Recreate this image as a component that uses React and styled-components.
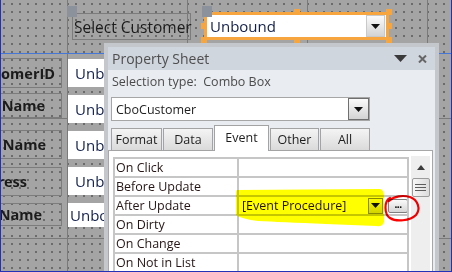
import React from "react";
import styled, { createGlobalStyle, css } from "styled-components";

const GlobalStyle = createGlobalStyle`
    html, body { margin: 0; padding: 0; background: #a4a4a4; }
    body { font-family: "Open Sans", "Noto Sans", sans-serif; overflow: hidden; }
`;

const CenterFlex = css`
    display: flex;
    align-items: center;
    justify-content: center;
`;

// design surface: gray grid with dots, inch lines and the header/detail section bar
const Canvas = styled.div`
    position: relative;
    width: 452px;
    height: 272px;
    overflow: hidden;
    isolation: isolate;
    background-color: #a4a4a4;
    background-image:
        linear-gradient(to bottom, transparent 53px, #4777d6 53px, #4777d6 54px, transparent 54px),
        linear-gradient(to right, #7a7a7a 1px, transparent 1px),
        linear-gradient(to bottom, #7a7a7a 1px, transparent 1px),
        radial-gradient(circle at 1px 1px, #6a6a6a 0.7px, transparent 1px);
    background-size: 100% 100%, 120px 100%, 100% 120px, 8px 8px;
    background-position: 0 0, 67px 0, 0 118px, 3px 3px;

    &::after {
        content: "";
        position: absolute;
        inset: 0;
        border: 1px solid #2231b5;
        border-top: none;
        pointer-events: none;
        z-index: 5;
    }
`;

const FieldLabel = styled.div`
    position: absolute;
    left: -50px;
    top: ${ p => p.$top }px;
    width: 112px;
    height: ${ p => p.$h }px;
    box-sizing: border-box;
    border: 1px solid #7c7c7c;
    padding-right: ${ p => p.$pr }px;
    display: flex;
    align-items: center;
    justify-content: flex-end;
    font-size: 14.5px;
    font-weight: 700;
    color: #1b1b1b;
    white-space: nowrap;
`;

// only the part left of the property sheet is visible
const FieldBox = styled.div`
    position: absolute;
    left: 68px;
    top: ${ p => p.$top }px;
    width: 36px;
    height: ${ p => p.$h }px;
    box-sizing: border-box;
    background: #fff;
    padding-left: ${ p => p.$pl }px;
    display: flex;
    align-items: center;
    overflow: hidden;
    font-size: 15px;
    color: #13204a;
    white-space: nowrap;
`;

const HeaderLabel = styled.div`
    position: absolute;
    left: 72px;
    top: 13px;
    width: 119px;
    height: 27px;
    box-sizing: border-box;
    border: 1px solid #7c7c7c;
    padding-left: 1px;
    display: flex;
    align-items: center;
    font-size: 15.5px;
    color: #1b1b1b;
    white-space: nowrap;
`;

const MoveHandle = styled.div`
    position: absolute;
    left: ${ p => p.$x }px;
    top: 6px;
    width: 10px;
    height: 11px;
    background: #8b929b;
`;

const SizeHandle = styled.div`
    position: absolute;
    left: ${ p => p.$x }px;
    top: ${ p => p.$y }px;
    width: 6px;
    height: 6px;
    background: #f7a53e;
`;

const SelectedCombo = styled.div`
    position: absolute;
    left: 204px;
    top: 12px;
    width: 185px;
    height: 28px;
    box-sizing: border-box;
    border: 3px solid #f7a53e;
    background: #fff;
    display: flex;
    align-items: stretch;
`;

const ComboText = styled.div`
    flex: 1;
    display: flex;
    align-items: center;
    padding-left: ${ p => p.$pl || 3 }px;
    font-size: ${ p => p.$size || 15 }px;
    color: ${ p => p.$color || "#13204a" };
    white-space: nowrap;
`;

const ArrowButton = styled.div`
    ${ CenterFlex }
    width: ${ p => p.$w }px;
    box-sizing: border-box;
    margin: ${ p => p.$m || "0" };
    border: 1px solid ${ p => p.$border || "#c9c9c9" };
    background: linear-gradient(#fbfbfb, #d3d3d3);
`;

// property sheet window
const Sheet = styled.div`
    position: absolute;
    left: 104px;
    top: 43px;
    width: 335px;
    height: 240px;
    box-sizing: border-box;
    border: 4px solid #c4c8cd;
    border-bottom: none;
    background: #e9ecf0;
    display: flex;
    flex-direction: column;
`;

const TitleBar = styled.div`
    height: 23px;
    flex-shrink: 0;
    background: #d0d6dd;
    display: flex;
    align-items: center;
    padding: 0 8px 0 4px;
    font-size: 14px;
    color: #4e4e4e;
`;

const TitleText = styled.div`
    flex: 1;
`;

const TitleIcons = styled.div`
    display: flex;
    align-items: center;
    gap: 11px;
`;

const SelectionLine = styled.div`
    height: 22px;
    flex-shrink: 0;
    display: flex;
    align-items: center;
    padding-left: 4px;
    font-size: 12.5px;
    color: #4b4b4b;
    white-space: pre;
`;

const NameCombo = styled.div`
    margin: 5px 0 0 3px;
    width: 259px;
    height: 24px;
    flex-shrink: 0;
    box-sizing: border-box;
    border: 1px solid #a6a6a6;
    background: #fff;
    display: flex;
    align-items: stretch;
`;

const TabRow = styled.div`
    position: relative;
    z-index: 1;
    margin: 4px 0 -1px 3px;
    height: 26px;
    flex-shrink: 0;
    display: flex;
    align-items: flex-end;
    gap: 1px;
`;

const Tab = styled.div`
    ${ CenterFlex }
    width: ${ p => p.$w }px;
    height: ${ p => p.$active ? 26 : 23 }px;
    box-sizing: border-box;
    border: 1px solid #a3a3a3;
    border-bottom: ${ p => p.$active ? "none" : "1px solid #a3a3a3" };
    background: ${ p => p.$active ? "#fff" : "linear-gradient(#f4f4f4, #dadada)" };
    padding-bottom: ${ p => p.$active ? 3 : 0 }px;
    font-size: 12.5px;
    color: #1e1e1e;
`;

const Pane = styled.div`
    width: 325px;
    flex: 1;
    box-sizing: border-box;
    border: 1px solid #a7a7a7;
    background: #fff;
    padding: 6px 2px 0 4px;
    display: flex;
    align-items: flex-start;
`;

const PropGrid = styled.div`
    width: 296px;
    box-sizing: border-box;
    padding: 2px;
    background: #c6c6c6;
    display: grid;
    grid-template-columns: 122px 168px;
    grid-auto-rows: 17px;
    gap: 2px;
`;

const PropCell = styled.div`
    background: #fff;
    display: flex;
    align-items: center;
    padding-left: ${ p => p.$pl || 1 }px;
    font-size: 12.5px;
    color: #261515;
    white-space: nowrap;
    overflow: hidden;
`;

const CellText = styled.div`
    flex: 1;
`;

const BuildButton = styled.div`
    ${ CenterFlex }
    width: 20px;
    height: 14px;
    box-sizing: border-box;
    margin: 1px -1px 0 5px;
    border: 1px solid #7f7f7f;
    border-radius: 2px;
    background: linear-gradient(#fafafa, #d6d6d6);
    font-size: 10px;
    font-weight: 700;
    letter-spacing: -0.5px;
    line-height: 1;
    padding-bottom: 4px;
    color: #000;
`;

const ScrollBar = styled.div`
    width: 19px;
    height: 120px;
    margin: -1px 0 0 2px;
    background: #eeeeee;
    display: flex;
    flex-direction: column;
    align-items: center;
`;

const ScrollArrow = styled.div`
    ${ CenterFlex }
    height: 22px;
`;

const ScrollThumb = styled.div`
    width: 18px;
    height: 19px;
    box-sizing: border-box;
    border: 1px solid #9c9c9c;
    border-radius: 2px;
    background: linear-gradient(to right, #f7f7f7, #dcdcdc);
    display: flex;
    flex-direction: column;
    align-items: center;
    justify-content: center;
    gap: 2px;
`;

const Grip = styled.span`
    width: 11px;
    height: 1px;
    background: #5d5d5d;
`;

const Markup = styled.svg`
    position: absolute;
    inset: 0;
    mix-blend-mode: multiply;
    pointer-events: none;
`;

const Triangle = ({ w = 9, h = 5, color = "#111" }) => (
    <svg width={ w } height={ h } viewBox={ `0 0 ${ w } ${ h }` }>
        <polygon points={ `0,0 ${ w },0 ${ w / 2 },${ h }` } fill={ color } />
    </svg>
);

const CloseIcon = () => (
    <svg width="9" height="8" viewBox="0 0 9 8">
        <path d="M1 0.5 L8 7.5 M8 0.5 L1 7.5" stroke="#666" strokeWidth="2" />
    </svg>
);

const fields = [
    { top: 58, h: 30, label: "CustomerID", pr: 6, boxTop: 59, boxH: 28, pl: 7 },
    { top: 93, h: 25, label: "First Name", pr: 16, boxTop: 95, boxH: 28, pl: 7 },
    { top: 130, h: 29, label: "Last Name", pr: 15, boxTop: 131, boxH: 28, pl: 7 },
    { top: 167, h: 29, label: "Address", pr: 34, boxTop: 167, boxH: 28, pl: 7 },
    { top: 203, h: 23, label: "Company Name", pr: 19, boxTop: 203, boxH: 24, pl: 2 },
];

const tabs = [
    { label: "Format", w: 51 },
    { label: "Data", w: 50 },
    { label: "Event", w: 55, active: true },
    { label: "Other", w: 49 },
    { label: "All", w: 50 },
];

const props = [
    "On Click",
    "Before Update",
    "After Update",
    "On Dirty",
    "On Change",
    "On Not in List",
    "On Enter",
];

function App() {
    return (
        <Canvas>
            <GlobalStyle />

            { fields.map(f => (
                <React.Fragment key={ f.label }>
                    <FieldLabel $top={ f.top } $h={ f.h } $pr={ f.pr }>{ f.label }</FieldLabel>
                    <FieldBox $top={ f.boxTop } $h={ f.boxH } $pl={ f.pl }>Unbound</FieldBox>
                </React.Fragment>
            )) }

            <HeaderLabel>Select Customer</HeaderLabel>
            <SelectedCombo>
                <ComboText>Unbound</ComboText>
                <ArrowButton $w={ 19 } $m="0 1px 0 0">
                    <Triangle w={ 9 } h={ 5 } />
                </ArrowButton>
            </SelectedCombo>
            <MoveHandle $x={ 67 } />
            <MoveHandle $x={ 202 } />
            <SizeHandle $x={ 201 } $y={ 23 } />
            <SizeHandle $x={ 201 } $y={ 37 } />
            <SizeHandle $x={ 294 } $y={ 9 } />
            <SizeHandle $x={ 294 } $y={ 37 } />
            <SizeHandle $x={ 386 } $y={ 9 } />
            <SizeHandle $x={ 386 } $y={ 23 } />
            <SizeHandle $x={ 386 } $y={ 37 } />

            <Sheet>
                <TitleBar>
                    <TitleText>Property Sheet</TitleText>
                    <TitleIcons>
                        <Triangle w={ 13 } h={ 7 } color="#3a3a3a" />
                        <CloseIcon />
                    </TitleIcons>
                </TitleBar>
                <SelectionLine>Selection type:  Combo Box</SelectionLine>
                <NameCombo>
                    <ComboText $pl={ 4 } $size={ 12.5 } $color="#1e1e1e">CboCustomer</ComboText>
                    <ArrowButton $w={ 21 } $border="#6f6f6f">
                        <Triangle w={ 9 } h={ 5 } />
                    </ArrowButton>
                </NameCombo>
                <TabRow>
                    { tabs.map(t => (
                        <Tab key={ t.label } $w={ t.w } $active={ t.active }>{ t.label }</Tab>
                    )) }
                </TabRow>
                <Pane>
                    <PropGrid>
                        { props.map(name => (
                            <React.Fragment key={ name }>
                                <PropCell>{ name }</PropCell>
                                { name === "After Update" ? (
                                    <PropCell $pl={ 3 }>
                                        <CellText>[Event Procedure]</CellText>
                                        <ArrowButton $w={ 15 } $border="#8a8a8a" style={ { height: 16 } }>
                                            <Triangle w={ 9 } h={ 5 } />
                                        </ArrowButton>
                                        <BuildButton>...</BuildButton>
                                    </PropCell>
                                ) : (
                                    <PropCell />
                                ) }
                            </React.Fragment>
                        )) }
                    </PropGrid>
                    <ScrollBar>
                        <ScrollArrow>
                            <svg width="8" height="5" viewBox="0 0 8 5">
                                <polygon points="0,5 8,5 4,0" fill="#3c3c3c" />
                            </svg>
                        </ScrollArrow>
                        <ScrollThumb>
                            <Grip />
                            <Grip />
                            <Grip />
                        </ScrollThumb>
                    </ScrollBar>
                </Pane>
            </Sheet>

            {/* highlighter and pen marks drawn over the screenshot */ }
            <Markup width="452" height="272" viewBox="0 0 452 272">
                <path
                    d="M237,190 L380,189 Q384,190 384,196 L384,222 Q383,227 376,226 L326,224 Q280,222 258,221 Q242,219 236,215 L236,194 Q236,190 237,190 Z"
                    fill="#ffff00"
                />
                <path
                    d="M390,198 C384,201 384,214 390,218 C396,222 410,221 416,215 C421,209 418,200 410,197 C403,195 394,196 389,201"
                    fill="none"
                    stroke="#ff0000"
                    strokeWidth="2.2"
                    strokeLinecap="round"
                />
            </Markup>
        </Canvas>
    );
}

export default App;
